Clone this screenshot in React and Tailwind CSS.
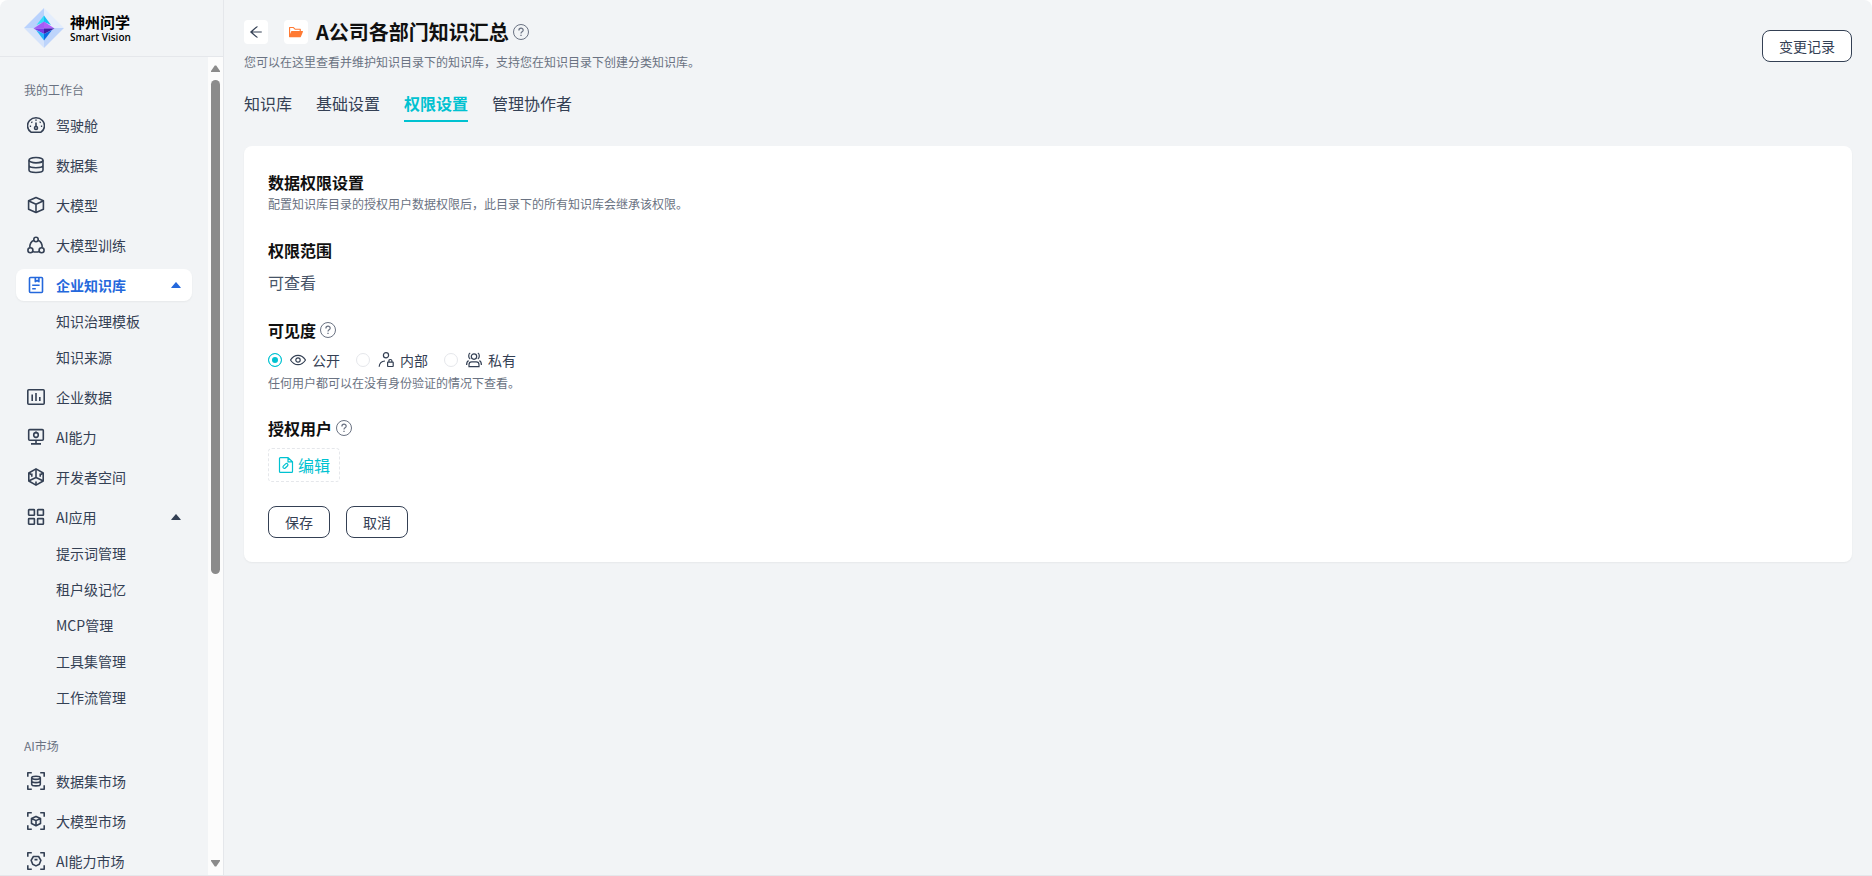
import { useState } from "react";
import { AiFillCaretUp, AiFillFolderOpen, AiOutlineArrowLeft } from "react-icons/ai";

const icons = {
  dashboard: (
    <>
      <path d="M4 16.200C-.5 13-.3 7.500 2.600 4.500c3.500-3.600 9.300-3.600 12.800 0 2.900 3 3.100 8.500-1.400 11.700Z" />
      <circle cx="9" cy="12" r="1.500" />
      <path d="M9 10.300V6.500M9 3.600v1.200M4.400 5.800l.9.800M13.600 5.800l-.9.800M2.800 10.200h1.300M13.900 10.200h1.300" />
    </>
  ),
  database: (
    <>
      <ellipse cx="9" cy="4.200" rx="7" ry="2.700" />
      <path d="M2 4.200v9.800c0 1.400 3 2.500 7 2.500s7-1.100 7-2.500V4.200M2 9.200c0 1.400 3 2.500 7 2.500s7-1.100 7-2.500" />
    </>
  ),
  cube: (
    <>
      <path d="M9 1.500l7.400 3.300v8.400L9 16.500l-7.400-3.300V4.800Z" />
      <path d="M1.900 5L9 8.200 16.100 5M9 8.200v8" />
    </>
  ),
  train: (
    <>
      <circle cx="9" cy="3.500" r="2.200" />
      <circle cx="3.400" cy="14.200" r="2.500" />
      <circle cx="14.600" cy="14.200" r="2.500" />
      <path d="M6.900 4.200C4.200 5.400 2.700 8.300 2.800 11.600M11.100 4.200c2.700 1.200 4.200 4.100 4.100 7.400M5.800 15.400c2 .8 4.400.8 6.400 0" />
    </>
  ),
  book: (
    <>
      <rect x="2.500" y="1.500" width="13" height="15" rx="1" />
      <path d="M8.300 1.700v4l1.800-1.300 1.800 1.300v-4M5.200 9.200h7.400M5.200 12.800h3.600" />
    </>
  ),
  chart: (
    <>
      <rect x=".8" y="1.700" width="16.400" height="14.600" rx="1" />
      <path d="M5.200 6.600v6.400M9 4.900v8.100M12.800 9v4" />
    </>
  ),
  monitor: (
    <>
      <rect x="1.700" y="1.600" width="14.600" height="10.600" rx="1" />
      <circle cx="9" cy="6.900" r="2.300" />
      <path d="M9 12.200v3.600M4 15.900h10M9 3.600v1M9 9.200v1" />
    </>
  ),
  hexagon: (
    <>
      <path d="M9 .9l7.200 4.100v8L9 17.100 1.800 13V5Z" />
      <path d="M9 1v8.600l-6.900 3.200M9 9.600l6.900 3.200M2 5.200l2.800 1.600M16 5.200l-2.800 1.600M9 13.600V17M4.800 5.600v3.200M13.200 5.600v3.200" />
    </>
  ),
  apps: (
    <>
      <rect x="1.600" y="1.600" width="5.800" height="5.600" rx=".5" />
      <rect x="10.600" y="1.600" width="5.800" height="5.600" rx=".5" />
      <rect x="1.600" y="10.600" width="5.800" height="5.600" rx=".5" />
      <rect x="10.600" y="10.600" width="5.800" height="5.600" rx=".5" />
    </>
  ),
  marketData: (
    <>
      <path d="M.8 4.800v-4h4M13.200.8h4v4M17.200 13.200v4h-4M4.800 17.200h-4v-4" />
      <ellipse cx="9" cy="5.800" rx="4.300" ry="1.600" />
      <path d="M4.700 5.800v6.400c0 .9 1.900 1.700 4.300 1.700s4.300-.8 4.300-1.700V5.800M4.700 9c0 .9 1.900 1.600 4.300 1.600s4.300-.7 4.300-1.600" />
    </>
  ),
  marketCube: (
    <>
      <path d="M.8 4.800v-4h4M13.200.8h4v4M17.200 13.200v4h-4M4.800 17.200h-4v-4" />
      <path d="M9 4.400l4.500 2v5.100L9 13.700l-4.500-2.200V6.400ZM4.600 6.500L9 8.600l4.400-2.100M9 8.600v5" />
    </>
  ),
  marketAi: (
    <>
      <path d="M.8 4.800v-4h4M13.200.8h4v4M17.200 13.200v4h-4M4.800 17.200h-4v-4" />
      <path d="M6.400 4.500h5.200l2.300 3.800-1.600 4-3.300 1.600-3.300-1.600-1.600-4ZM7.500 7.600h3" />
    </>
  ),
};

const groups = [
  {
    title: "我的工作台",
    items: [
      { name: "驾驶舱", icon: "dashboard" },
      { name: "数据集", icon: "database" },
      { name: "大模型", icon: "cube" },
      { name: "大模型训练", icon: "train" },
      { name: "企业知识库", icon: "book", active: true, children: ["知识治理模板", "知识来源"] },
      { name: "企业数据", icon: "chart" },
      { name: "AI能力", icon: "monitor" },
      { name: "开发者空间", icon: "hexagon" },
      {
        name: "AI应用",
        icon: "apps",
        children: ["提示词管理", "租户级记忆", "MCP管理", "工具集管理", "工作流管理"],
      },
    ],
  },
  {
    title: "AI市场",
    items: [
      { name: "数据集市场", icon: "marketData" },
      { name: "大模型市场", icon: "marketCube" },
      { name: "AI能力市场", icon: "marketAi" },
    ],
  },
];

const tabs = ["知识库", "基础设置", "权限设置", "管理协作者"];

const visibility = [
  {
    value: "公开",
    icon: (
      <>
        <path d="M.5 8C2.400 5 5 3.300 8 3.300S13.600 5 15.500 8C13.600 11 11 12.700 8 12.700S2.400 11 .5 8Z" />
        <circle cx="8" cy="8" r="2.200" />
      </>
    ),
  },
  {
    value: "内部",
    icon: (
      <>
        <circle cx="8" cy="3.300" r="2.600" />
        <path d="M1.200 14.800c.2-3.600 2.300-5.700 5.800-5.800" />
        <rect x="9.600" y="10.200" width="5.600" height="4.300" rx=".4" />
        <path d="M10.900 10V8.700c0-1.600 3-1.600 3 0V10" />
      </>
    ),
  },
  {
    value: "私有",
    icon: (
      <>
        <circle cx="8" cy="4.600" r="2.700" />
        <path d="M3 14.700v-2c0-1.900 1-2.800 2.700-2.800h4.600c1.700 0 2.700.9 2.700 2.800v2ZM4.200 1C2.200 1.800 2.200 6 4.200 7M11.800 1c2 .8 2 5 0 6M2.600 8.600C1.100 9.200.6 10.600.6 13M13.400 8.600c1.500.6 2 2 2 4.400" />
      </>
    ),
  },
];

function MenuIcon({ name }) {
  return (
    <svg viewBox="0 0 18 18" className="size-[18px] shrink-0" fill="none" stroke="currentColor" strokeWidth="1.600" strokeLinejoin="round">
      {icons[name]}
    </svg>
  );
}

function HelpIcon() {
  return (
    <svg viewBox="0 0 16 16" className="size-4 shrink-0 text-gray-500" fill="none" stroke="currentColor">
      <circle cx="8" cy="8" r="7.500" />
      <path d="M5.900 6.400c0-2.900 4.300-2.900 4.300-.2 0 1.700-2.200 1.600-2.200 3.300" strokeWidth="1.200" />
      <path d="M8 10.800v1.300" strokeWidth="1.300" />
    </svg>
  );
}

function Logo() {
  return (
    <svg viewBox="0 0 40 40" className="size-10 shrink-0">
      <path d="M20 0L0 20h20Z" fill="#b9d2fd" />
      <path d="M20 0l20 20H20Z" fill="#e4edfc" />
      <path d="M0 20l20 20V20Z" fill="#d5e3fb" />
      <path d="M40 20L20 40V20Z" fill="#bdd4fb" />
      <path d="M20 7.500L12.500 17 20 14Z" fill="#35dcf8" />
      <path d="M20 7.500l7 9.500-7-3Z" fill="#18bdf5" />
      <path d="M9.500 20.500L20 13.500v7Z" fill="#a35cf5" />
      <path d="M30.500 20.500L20 13.500v7Z" fill="#b060fa" />
      <path d="M9.500 20.500H20V26Z" fill="#7a3be6" />
      <path d="M30.500 20.500H20V26Z" fill="#3d1fa6" />
      <path d="M12 22l8 10.500V26Z" fill="#2bb5f9" />
      <path d="M28 22l-8 10.500V26Z" fill="#0b6ce6" />
    </svg>
  );
}

function MenuItem({ item }) {
  return (
    <li>
      <a
        href="#"
        className={
          item.active
            ? "flex h-8 items-center gap-[11px] rounded-lg bg-white pr-[9px] pl-[11px] font-semibold text-[#2468dc] shadow-xs"
            : "flex h-8 items-center gap-[11px] rounded-lg pr-[9px] pl-[11px] text-[#344054]"
        }
      >
        <MenuIcon name={item.icon} />
        <span className="flex-1">{item.name}</span>
        {item.children && <AiFillCaretUp className="size-3.5" />}
      </a>
      {item.children && (
        <ul className="mt-1 flex flex-col gap-1">
          {item.children.map((child) => (
            <li key={child}>
              <a href="#" className="flex h-8 items-center pl-10 text-[#344054]">
                {child}
              </a>
            </li>
          ))}
        </ul>
      )}
    </li>
  );
}

function Sidebar() {
  return (
    <aside className="flex w-56 shrink-0 flex-col border-r border-gray-200">
      <div className="flex h-[57px] shrink-0 items-center gap-1.5 border-b border-gray-200 pl-6">
        <Logo />
        <div className="text-black">
          <div className="text-[15px] leading-[18px] font-bold">神州问学</div>
          <div className="font-['Open_Sans',sans-serif] text-[10px] leading-3 font-semibold">Smart Vision</div>
        </div>
      </div>
      <div className="flex min-h-0 flex-1">
        <nav className="flex flex-1 flex-col gap-[25px] overflow-hidden px-4 pt-[25px] text-sm">
          {groups.map((group) => (
            <div key={group.title}>
              <h2 className="mb-[11px] pl-2 text-xs text-gray-500">{group.title}</h2>
              <ul className="flex flex-col gap-2">
                {group.items.map((item) => (
                  <MenuItem key={item.name} item={item} />
                ))}
              </ul>
            </div>
          ))}
        </nav>
        {/* scrollbar */}
        <div className="flex w-[15px] flex-col items-center gap-2 bg-[#fcfcfc] py-2 text-[#8b8b8b]">
          <svg viewBox="0 0 9 7" className="h-[7px] w-[9px]" fill="currentColor">
            <path d="M3.800.5h1.400L9 6v1H0V6Z" />
          </svg>
          <div className="w-[9px] flex-1">
            <div className="h-[64%] rounded-full bg-[#8b8b8b]" />
          </div>
          <svg viewBox="0 0 9 7" className="h-[7px] w-[9px]" fill="currentColor">
            <path d="M3.800 6.500h1.400L9 1V0H0v1Z" />
          </svg>
        </div>
      </div>
    </aside>
  );
}

function App() {
  const [tab, setTab] = useState("权限设置");
  const [visible, setVisible] = useState("公开");

  return (
    <div className="h-screen bg-white font-['Noto_Sans_CJK_SC',sans-serif]">
      <div className="flex h-full overflow-hidden rounded-t-lg border-b border-gray-200 bg-[#f2f4f6]">
        <Sidebar />
        <main className="min-w-0 flex-1 px-5 pt-5">
          <header className="flex items-start justify-between">
            <div>
              <div className="flex h-6 items-center">
                <button aria-label="返回" className="flex size-6 items-center justify-center rounded bg-white text-[#344054]">
                  <AiOutlineArrowLeft className="size-4" />
                </button>
                <span className="ml-4 flex size-6 items-center justify-center rounded bg-white text-[#ff7a33]">
                  <AiFillFolderOpen className="size-4" />
                </span>
                <h1 className="ml-2 mr-1 text-xl font-semibold text-[#101010]">A公司各部门知识汇总</h1>
                <HelpIcon />
              </div>
              <p className="mt-2.5 text-xs text-gray-500">
                您可以在这里查看并维护知识目录下的知识库，支持您在知识目录下创建分类知识库。
              </p>
            </div>
            <button className="mt-2.5 h-8 rounded-lg border border-[#344054] bg-white px-4 text-sm text-[#344054]">
              变更记录
            </button>
          </header>

          <div className="mt-5 flex gap-6">
            {tabs.map((name) => (
              <button
                key={name}
                onClick={() => setTab(name)}
                className={
                  name === tab
                    ? "h-8 border-b-2 border-[#00c2d1] pb-1 font-semibold text-[#00c2d1]"
                    : "h-8 border-b-2 border-transparent pb-1 text-[#344054]"
                }
              >
                {name}
              </button>
            ))}
          </div>

          <section className="mt-6 rounded-lg bg-white p-6 shadow-xs">
            <h2 className="font-semibold text-[#101010]">数据权限设置</h2>
            <p className="text-xs leading-5 text-gray-500">
              配置知识库目录的授权用户数据权限后，此目录下的所有知识库会继承该权限。
            </p>

            <h3 className="mt-6 font-semibold text-[#101010]">权限范围</h3>
            <p className="mt-2 text-[#475467]">可查看</p>

            <h3 className="mt-6 flex items-center gap-1 font-semibold text-[#101010]">
              可见度
              <HelpIcon />
            </h3>
            <div className="mt-2 flex h-5 items-center gap-4 text-sm text-[#344054]">
              {visibility.map((option) => (
                <label key={option.value} className="flex items-center">
                  <input
                    type="radio"
                    name="visibility"
                    checked={visible === option.value}
                    onChange={() => setVisible(option.value)}
                    className="mr-2 size-3.5 appearance-none rounded-full border border-gray-200 bg-white checked:border-[#00c2d1] checked:bg-[#00c2d1] checked:inset-shadow-[0_0_0_3px_white]"
                  />
                  <svg viewBox="0 0 16 16" className="mr-1.5 size-4" fill="none" stroke="currentColor" strokeWidth="1.200">
                    {option.icon}
                  </svg>
                  {option.value}
                </label>
              ))}
            </div>
            <p className="mt-1 text-xs leading-[18px] text-gray-500">任何用户都可以在没有身份验证的情况下查看。</p>

            <h3 className="mt-6 flex items-center gap-1 font-semibold text-[#101010]">
              授权用户
              <HelpIcon />
            </h3>
            <button className="mt-2 flex h-[34px] items-center gap-1 rounded border border-dashed border-gray-200 px-[9px] text-[#00c2d1]">
              <svg viewBox="0 0 16 16" className="size-4" fill="none" stroke="currentColor" strokeWidth="1.200">
                <path d="M10 .7H2.400q-.9 0-.9.900v12.800q0 .9.900.9h11.200q.9 0 .9-.9V4.800ZM10 .7v4.100h4.500" />
                <path d="M5.300 10.900c-.6-.7-.5-1.300 0-1.800l2.300-2.200c1.300-1.100 3.100.5 2 1.900l-2.300 2.200c-.6.500-1.400.500-2-.1Z" />
              </svg>
              编辑
            </button>

            <div className="mt-6 flex gap-4">
              <button className="h-8 rounded-lg border border-[#344054] bg-white px-4 text-sm text-[#344054]">保存</button>
              <button className="h-8 rounded-lg border border-[#344054] bg-white px-4 text-sm text-[#344054]">取消</button>
            </div>
          </section>
        </main>
      </div>
    </div>
  );
}

export default App;
